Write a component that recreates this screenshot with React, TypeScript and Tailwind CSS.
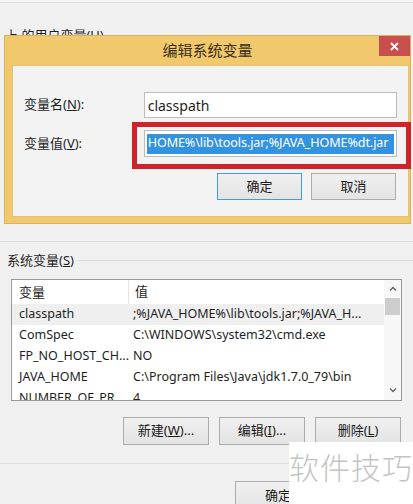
import React from "react";

const font = { fontFamily: '"Noto Sans", "Noto Sans CJK SC", sans-serif' };

function WinButton({ label, className = "", primary = false }: { label: React.ReactNode; className?: string; primary?: boolean }) {
  return (
    <div
      className={`flex items-center justify-center border ${primary ? "border-[#3c9ee0]" : "border-[#acacac]"} bg-gradient-to-b from-[#f0f0f0] to-[#e3e3e3] text-[13px] text-[#1a1a1a] ${className}`}
    >
      {label}
    </div>
  );
}

export default function App() {
  const rows: [string, string, boolean][] = [
    ["classpath", ";%JAVA_HOME%\\lib\\tools.jar;%JAVA_H...", true],
    ["ComSpec", "C:\\WINDOWS\\system32\\cmd.exe", false],
    ["FP_NO_HOST_CH...", "NO", false],
    ["JAVA_HOME", "C:\\Program Files\\Java\\jdk1.7.0_79\\bin", false],
    ["NUMBER_OF_PR...", "4", false],
  ];
  return (
    <div className="relative h-[504px] w-[413px] overflow-hidden bg-[#f0f0f0] text-[#1e1e1e]" style={font}>
      <div className="h-[3px] border-b border-[#dcdcdc] bg-[#f4f4f4]" />
      {/* hidden label behind dialog */}
      <div className="h-[32px] overflow-hidden pl-[5px] pt-[24px] text-[13px] leading-[16px]">上 的用户变量(U)</div>

      {/* dialog */}
      <div className="relative ml-[4px] w-[407px] border border-[#d9b35c] bg-[#f1c86b]">
        <div className="relative flex h-[29px] items-center justify-center">
          <span className="text-[15px] text-[#3a3020]">编辑系统变量</span>
          <div className="absolute right-[0px] top-0 flex h-[20px] w-[31px] items-center justify-center bg-[#c94f4f] text-white">
            <svg width="9" height="9" viewBox="0 0 9 9">
              <path d="M1 1L8 8M8 1L1 8" stroke="white" strokeWidth="1.8" />
            </svg>
          </div>
        </div>
        <div className="mb-[6px] ml-[7px] mr-[1px] h-[152px] border border-[#e0c27a] bg-[#f3f3f3] px-[11px] pt-[26px]">
          <div className="flex h-[26px] items-center">
            <span className="w-[120px] text-[13px]">
              变量名(<span className="underline">N</span>):
            </span>
            <div className="flex h-[26px] w-[254px] items-center border border-[#bdbdbd] bg-white px-[3px] text-[14px]">classpath</div>
          </div>
          <div className="mt-[12px] flex h-[27px] items-center">
            <span className="w-[120px] text-[13px]">
              变量值(<span className="underline">V</span>):
            </span>
            <div className="flex h-[27px] w-[254px] items-center overflow-hidden border border-[#bdbdbd] bg-white px-[2px]">
              <div className="flex h-[20px] w-full items-center justify-start overflow-hidden whitespace-nowrap bg-[#3393e0] pl-[1px] text-[12.6px] tracking-[-0.1px] text-white">
                HOME%\lib\tools.jar;%JAVA_HOME%dt.jar
              </div>
            </div>
          </div>
          <div className="mt-[16px] flex justify-end gap-[9px] pr-[1px]">
            <WinButton label="确定" primary className="h-[27px] w-[85px]" />
            <WinButton label="取消" className="h-[27px] w-[85px]" />
          </div>
        </div>
        {/* red annotation */}
        <div className="absolute left-[127px] top-[86px] h-[47px] w-[279px] border-[5px] border-[#cf2229]" />
      </div>

      <div className="mt-[17px] border-t border-[#dedede]" />
      <div className="mt-[9px] flex items-center pl-[7px]">
        <span className="text-[13px]">
          系统变量(<span className="underline">S</span>)
        </span>
        <div className="ml-[4px] flex-1 border-t border-[#dcdcdc]" />
      </div>

      {/* list */}
      <div className="ml-[11px] mt-[8px] flex h-[122px] w-[391px] overflow-hidden border border-[#9a9a9a] bg-white">
        <div className="flex-1 overflow-hidden">
          <div className="flex h-[24px] items-center text-[13px]">
            <div className="h-full w-[117px] border-r border-[#e5e5e5] pl-[7px] leading-[24px]">变量</div>
            <div className="pl-[6px]">值</div>
          </div>
          {rows.map(([k, v, sel]) => (
            <div key={k} className={`flex h-[21px] items-center whitespace-nowrap text-[12.5px] ${sel ? "bg-[#efefef]" : ""}`}>
              <div className="w-[121px] pl-[7px]">{k}</div>
              <div>{v}</div>
            </div>
          ))}
        </div>
        <div className="flex w-[17px] flex-col bg-[#f7f7f7]">
          <div className="flex h-[18px] items-center justify-center">
            <svg width="8" height="5" viewBox="0 0 8 5">
              <path d="M1 4.5L4 1.5L7 4.5" stroke="#606060" strokeWidth="1.3" fill="none" />
            </svg>
          </div>
          <div className="mx-[1px] h-[17px] bg-[#cdcdcd]" />
          <div className="flex-1" />
          <div className="flex h-[18px] items-center justify-center">
            <svg width="8" height="5" viewBox="0 0 8 5">
              <path d="M1 0.5L4 3.5L7 0.5" stroke="#606060" strokeWidth="1.3" fill="none" />
            </svg>
          </div>
        </div>
      </div>

      <div className="mt-[16px] flex justify-end gap-[10px] pr-[12px]">
        <WinButton label={<>新建(<span className="underline">W</span>)...</>} className="h-[28px] w-[86px]" />
        <WinButton label={<>编辑(<span className="underline">I</span>)...</>} className="h-[28px] w-[86px]" />
        <WinButton label={<>删除(<span className="underline">L</span>)</>} className="h-[28px] w-[86px]" />
      </div>

      <div className="mt-[18px] border-t border-[#dcdcdc]" />
      <div className="mt-[17px] flex pl-[235px]">
        <WinButton label="确定" className="h-[30px] w-[86px]" />
      </div>

      {/* watermark */}
      <div className="absolute left-[289px] top-[442px] flex h-[62px] w-[124px] items-start justify-center bg-white pt-[4px]">
        <span className="text-[30px] leading-[40px] tracking-[1px] text-[#c4c4c4]" style={{ fontFamily: '"Noto Sans CJK SC", sans-serif', fontWeight: 300 }}>
          软件技巧
        </span>
      </div>
    </div>
  );
}
